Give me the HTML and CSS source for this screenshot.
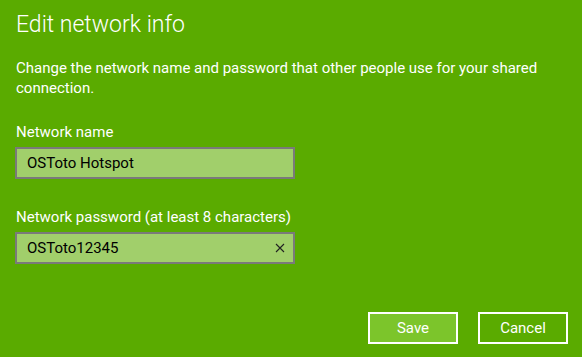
FILE: index.html
```html
<!DOCTYPE html>
<html>
  <head>
    <meta charset="utf-8">
    <title>Edit network info</title>
    <link rel="stylesheet" href="styles.css">
  </head>
  <body>
    <div class="dialog">
      <h1>Edit network info</h1>
      <p class="intro">Change the network name and password that other people use for your shared connection.</p>
      <label class="field">
        <span class="label">Network name</span>
        <span class="box">
          <span class="value">OSToto Hotspot</span>
        </span>
      </label>
      <label class="field">
        <span class="label">Network password (at least 8 characters)</span>
        <span class="box">
          <span class="value">OSToto12345</span>
          <svg class="clear" width="10" height="10" viewBox="0 0 10 10">
            <path d="M1 1 L9 9 M9 1 L1 9" stroke="#222" stroke-width="1.1" fill="none"/>
          </svg>
        </span>
      </label>
      <div class="actions">
        <a href="#" class="btn primary">Save</a>
        <a href="#" class="btn">Cancel</a>
      </div>
    </div>
  </body>
</html>
```

FILE: styles.css
```css
body, html {
    padding: 0;
    margin: 0;
    height: 100%;
    background: #5aab00;
    font-family: Roboto, sans-serif;
    font-size: 15px;
    color: #fff;
}

.dialog {
    display: flex;
    flex-direction: column;
    height: 100%;
    box-sizing: border-box;
    padding: 10px 14px 13px 16px;
}

h1 {
    margin: 0;
    font-size: 23px;
    font-weight: 300;
    line-height: 30px;
}

.intro {
    margin: 18px 0 0;
    line-height: 20px;
}

.field {
    display: flex;
    flex-direction: column;
    margin-top: 24px;
}

.field + .field {
    margin-top: 28px;
}

.label {
    line-height: 20px;
    margin-bottom: 5px;
}

.box {
    display: flex;
    align-items: center;
    justify-content: space-between;
    width: 280px;
    height: 32px;
    margin-left: -1px;
    box-sizing: border-box;
    border: 2px solid #7a7a7a;
    background: #a1cf6b;
    color: #000;
    padding: 0 8px 0 10px;
}

.actions {
    display: flex;
    justify-content: flex-end;
    gap: 20px;
    margin-top: auto;
}

a {
    text-decoration: none;
    color: inherit;
}

.btn {
    display: flex;
    align-items: center;
    justify-content: center;
    width: 90px;
    height: 32px;
    box-sizing: border-box;
    border: 2px solid #fff;
}

.btn.primary {
    background: #7cc52b;
}
```
